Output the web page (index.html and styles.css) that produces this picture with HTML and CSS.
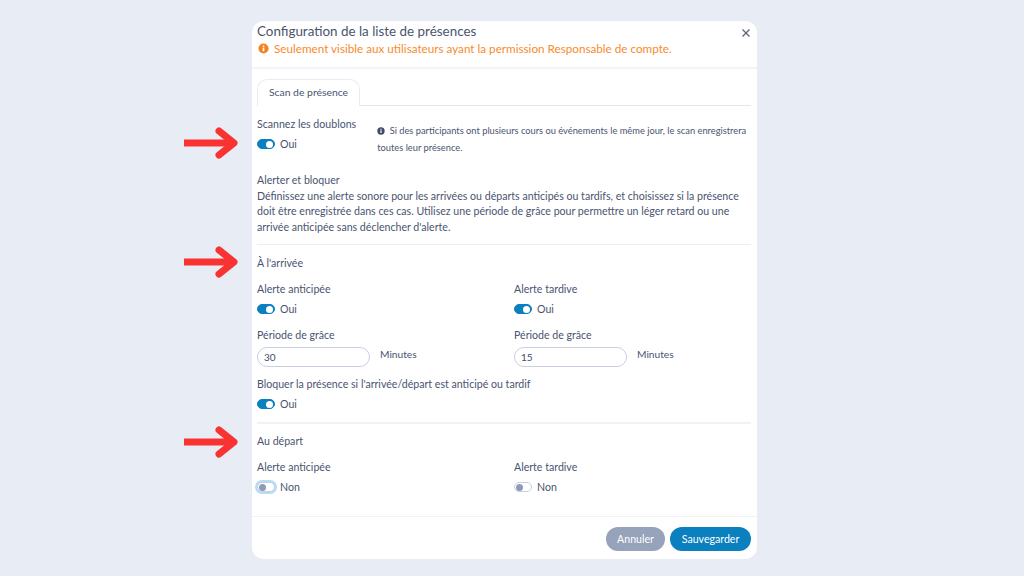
FILE: index.html
```html
<!DOCTYPE html>
<html lang="fr">
<head>
    <meta charset="UTF-8">
    <title>Configuration de la liste de présences</title>
    <link rel="stylesheet" href="styles.css">
</head>
<body>
    <!-- Red annotation arrows -->
    <svg class="arrow arrow-1" viewBox="0 0 54 32"><path class="shaft" d="M0 16H48"/><path d="M35 4L50 16L35 28"/></svg>
    <svg class="arrow arrow-2" viewBox="0 0 54 32"><path class="shaft" d="M0 16H48"/><path d="M35 4L50 16L35 28"/></svg>
    <svg class="arrow arrow-3" viewBox="0 0 54 32"><path class="shaft" d="M0 16H48"/><path d="M35 4L50 16L35 28"/></svg>

    <div class="modal">
        <div class="modal-header">
            <div class="modal-title">Configuration de la liste de présences</div>
            <div class="warning">
                <svg class="info-icon" viewBox="0 0 12 12">
                    <circle cx="6" cy="6" r="5.5" fill="#f5821f"/>
                    <rect x="5.1" y="5" width="1.8" height="4" fill="#fff"/>
                    <rect x="5.1" y="2.6" width="1.8" height="1.6" fill="#fff"/>
                </svg>
                Seulement visible aux utilisateurs ayant la permission Responsable de compte.
            </div>
            <svg class="close" viewBox="0 0 10 10"><path d="M1.5 1.5L8.5 8.5M8.5 1.5L1.5 8.5"/></svg>
        </div>

        <div class="modal-body">
            <div class="tabs">
                <div class="tab">Scan de présence</div>
            </div>

            <div class="scan-row">
                <div class="scan-field">
                    <div class="label">Scannez les doublons</div>
                    <div class="toggle-row">
                        <span class="toggle on"></span>
                        Oui
                    </div>
                </div>
                <div class="hint">
                    <svg class="hint-icon" viewBox="0 0 12 12">
                        <circle cx="6" cy="6" r="5.5" fill="#3f4a66"/>
                        <rect x="5.1" y="5" width="1.8" height="4" fill="#fff"/>
                        <rect x="5.1" y="2.6" width="1.8" height="1.6" fill="#fff"/>
                    </svg>
                    Si des participants ont plusieurs cours ou événements le même jour, le scan enregistrera toutes leur présence.
                </div>
            </div>

            <div class="alert-text">
                <div>Alerter et bloquer</div>
                <div>Définissez une alerte sonore pour les arrivées ou départs anticipés ou tardifs, et choisissez si la présence doit être enregistrée dans ces cas. Utilisez une période de grâce pour permettre un léger retard ou une arrivée anticipée sans déclencher d'alerte.</div>
            </div>

            <div class="section arrival">
                <div class="section-title">À l'arrivée</div>
                <div class="columns">
                    <div>
                        <div class="label">Alerte anticipée</div>
                        <div class="toggle-row"><span class="toggle on"></span>Oui</div>
                        <div class="label grace">Période de grâce</div>
                        <div class="minutes-row">
                            <input class="minutes-input" type="text" value="30">
                            <span class="minutes">Minutes</span>
                        </div>
                    </div>
                    <div>
                        <div class="label">Alerte tardive</div>
                        <div class="toggle-row"><span class="toggle on"></span>Oui</div>
                        <div class="label grace">Période de grâce</div>
                        <div class="minutes-row">
                            <input class="minutes-input" type="text" value="15">
                            <span class="minutes">Minutes</span>
                        </div>
                    </div>
                </div>
                <div class="label block-label">Bloquer la présence si l'arrivée/départ est anticipé ou tardif</div>
                <div class="toggle-row"><span class="toggle on"></span>Oui</div>
            </div>

            <div class="section departure">
                <div class="section-title">Au départ</div>
                <div class="columns">
                    <div>
                        <div class="label">Alerte anticipée</div>
                        <div class="toggle-row"><span class="toggle focus"></span>Non</div>
                    </div>
                    <div>
                        <div class="label">Alerte tardive</div>
                        <div class="toggle-row"><span class="toggle"></span>Non</div>
                    </div>
                </div>
            </div>
        </div>

        <div class="modal-footer">
            <button class="btn btn-cancel">Annuler</button>
            <button class="btn btn-save">Sauvegarder</button>
        </div>
    </div>
</body>
</html>
```

FILE: styles.css
```css
body {
    margin: 0;
    height: 576px;
    overflow: hidden;
    padding-top: 21px;
    box-sizing: border-box;
    background-color: #e8ecf5;
    font-family: "Lato", "Open Sans", sans-serif;
    font-size: 10.6px;
    color: #4a546f;
}

.arrow {
    position: absolute;
    left: 184px;
    width: 54px;
    height: 32px;
    fill: none;
    stroke: #f93232;
    stroke-width: 7;
    stroke-linejoin: round;
    stroke-linecap: round;
}

.arrow .shaft {
    stroke-linecap: butt;
}

.arrow-1 { top: 127px; }
.arrow-2 { top: 246px; }
.arrow-3 { top: 426px; }

.modal {
    width: 505px;
    height: 538px;
    margin-left: 252px;
    background-color: white;
    border-radius: 12px;
    display: flex;
    flex-direction: column;
}

.modal-header {
    position: relative;
    height: 46px;
    padding-left: 5px;
    border-bottom: 2px solid #f3f4f7;
}

.modal-title {
    padding-top: 2px;
    font-size: 13.4px;
    line-height: 17px;
}

.warning {
    display: flex;
    align-items: center;
    font-size: 11.7px;
    line-height: 17px;
    color: #f98a2c;
}

.info-icon {
    width: 11px;
    height: 11px;
    margin-right: 5px;
    margin-left: 1px;
}

.close {
    position: absolute;
    top: 7px;
    right: 6px;
    width: 10px;
    height: 10px;
    stroke: #5f6778;
    stroke-width: 1.4;
}

.modal-body {
    flex: 1;
    padding: 10px 6px 0 5px;
}

.tabs {
    height: 26px;
    border-bottom: 1px solid #e2e6f0;
}

.tab {
    box-sizing: border-box;
    width: 103px;
    height: 27px;
    padding-top: 6px;
    text-align: center;
    background-color: white;
    border: 1px solid #e8ebf3;
    border-bottom: none;
    border-radius: 10px 10px 0 0;
    font-size: 10.4px;
    line-height: 13px;
}

.label {
    line-height: 14px;
}

.toggle-row {
    display: flex;
    align-items: center;
    height: 14px;
    margin-top: 6px;
    line-height: 14px;
}

.toggle {
    box-sizing: border-box;
    position: relative;
    width: 18px;
    height: 10px;
    margin-right: 5px;
    border: 1px solid #c9cfe0;
    border-radius: 6px;
    background-color: white;
}

.toggle::after {
    content: '';
    position: absolute;
    top: 0.5px;
    left: 1px;
    width: 7px;
    height: 7px;
    border-radius: 50%;
    background-color: #8f9ab5;
}

.toggle.on {
    background-color: #0a80bf;
    border-color: #0a80bf;
}

.toggle.on::after {
    left: 8px;
    background-color: white;
}

.toggle.focus {
    box-shadow: 0 0 0 2px #b7dcf5;
}

.scan-row {
    display: flex;
    margin-top: 11px;
}

.scan-field {
    width: 121px;
}

.hint {
    width: 376px;
    padding-top: 6px;
    font-size: 9.3px;
    line-height: 16.5px;
}

.hint-icon {
    width: 8px;
    height: 8px;
    margin-right: 2px;
    vertical-align: -1px;
}

.alert-text {
    margin-top: 17px;
    padding-bottom: 9px;
    border-bottom: 1px solid #eceef4;
    line-height: 15.5px;
}

.section-title {
    line-height: 14px;
}

.arrival {
    padding-top: 11px;
    padding-bottom: 11px;
    border-bottom: 2px solid #f1f2f6;
}

.departure {
    padding-top: 10px;
}

.columns {
    display: grid;
    grid-template-columns: 257px 1fr;
    margin-top: 12px;
}

.grace {
    margin-top: 12px;
}

.minutes-row {
    display: flex;
    margin-top: 5px;
}

.minutes-input {
    box-sizing: border-box;
    width: 113px;
    height: 20px;
    padding: 0 6px;
    border: 1px solid #c9cfe0;
    border-radius: 10px;
    font-family: inherit;
    font-size: 10px;
    color: #414c68;
    outline: none;
}

.minutes {
    margin-left: 10px;
    font-size: 10.2px;
    line-height: 14px;
}

.block-label {
    margin-top: 10px;
}

.modal-footer {
    display: flex;
    justify-content: flex-end;
    align-items: flex-start;
    gap: 5px;
    height: 43px;
    padding: 10px 6px 0 0;
    box-sizing: border-box;
    border-top: 1px solid #f1f2f6;
}

.btn {
    height: 24px;
    padding: 0;
    border: none;
    border-radius: 12px;
    font-family: inherit;
    font-size: 10.6px;
    color: white;
}

.btn-cancel {
    width: 59px;
    background-color: #97a2bb;
}

.btn-save {
    width: 81px;
    background-color: #0a80bf;
}
```
